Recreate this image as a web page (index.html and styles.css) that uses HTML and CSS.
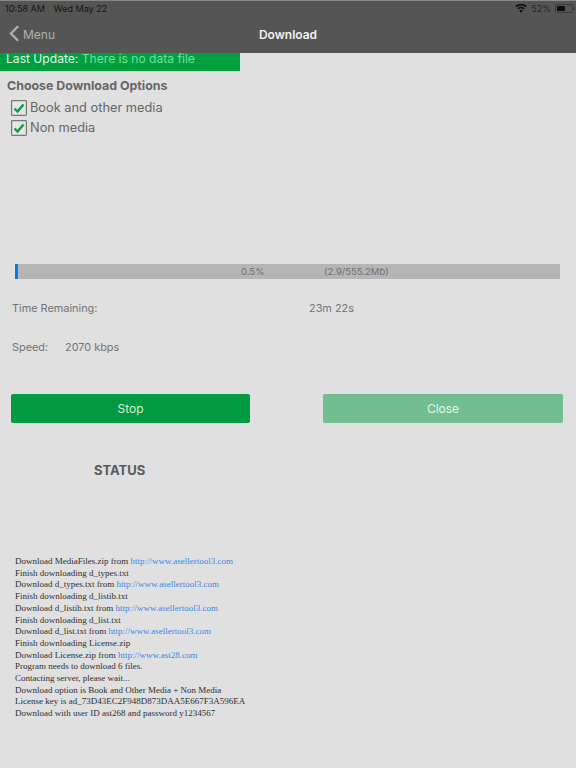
FILE: index.html
```html
<!DOCTYPE html>
<html lang="en">
<head>
<meta charset="utf-8">
<title>Download</title>
<link rel="stylesheet" href="styles.css">
</head>
<body>
<header class="header">
  <div class="status">
    <span class="clock">10:58 AM</span><span class="date">Wed May 22</span>
    <span class="status-right">
      <svg class="wifi" viewBox="0 0 16 12" width="12" height="9"><path d="M8 11.5 5.6 8.6a3.7 3.7 0 0 1 4.8 0zM4.4 7.2 3 5.6a7.7 7.7 0 0 1 10 0l-1.4 1.6a5.6 5.6 0 0 0-7.2 0zM1.8 4.2.3 2.6a11.6 11.6 0 0 1 15.4 0l-1.5 1.6a9.4 9.4 0 0 0-12.4 0z" fill="#111"/></svg>
      <span class="pct">52%</span>
      <svg class="battery" viewBox="0 0 20 9" width="20" height="9"><rect x=".5" y=".5" width="17" height="8" rx="2" fill="none" stroke="#3a3a3a"/><rect x="2" y="2" width="8" height="5" rx=".8" fill="#0c0c0c"/><path d="M18.6 3v3c.8-.2 1.2-.8 1.2-1.500s-.4-1.300-1.200-1.500z" fill="#3a3a3a"/></svg>
    </span>
  </div>
  <div class="nav">
    <span class="back">
      <svg viewBox="0 0 12 20" width="11" height="18"><path d="M10 1.500 2 9.500l8 8" fill="none" stroke="#b4b4b4" stroke-width="2.400"/></svg>
      Menu
    </span>
    <span class="title">Download</span>
  </div>
</header>
<div class="update"><span class="update-label">Last Update:</span> <span class="update-value">There is no data file</span></div>
<h2 class="options-title">Choose Download Options</h2>
<div class="option">
  <svg class="check" viewBox="0 0 16 16" width="16" height="16"><rect x=".6" y=".6" width="14.800" height="14.800" rx=".8" fill="#e6e6e6" stroke="#777" stroke-width="1.200"/><path d="M3.500 8.500 6.500 11.500 12.500 4.500" fill="none" stroke="#00a040" stroke-width="2.400"/></svg>
  Book and other media
</div>
<div class="option">
  <svg class="check" viewBox="0 0 16 16" width="16" height="16"><rect x=".6" y=".6" width="14.800" height="14.800" rx=".8" fill="#e6e6e6" stroke="#777" stroke-width="1.200"/><path d="M3.500 8.500 6.500 11.500 12.500 4.500" fill="none" stroke="#00a040" stroke-width="2.400"/></svg>
  Non media
</div>
<div class="progress">
  <div class="progress-fill"></div>
  <span class="progress-pct">0.5%</span>
  <span class="progress-size">(2.9/555.2Mb)</span>
</div>
<div class="time-row"><span class="time-label">Time Remaining:</span><span>23m 22s</span></div>
<div class="speed-row"><span class="speed-label">Speed:</span><span>2070 kbps</span></div>
<div class="buttons">
  <div class="btn btn-stop">Stop</div>
  <div class="btn btn-close">Close</div>
</div>
<h2 class="status-title">STATUS</h2>
<div class="log">
  <div>Download MediaFiles.zip from <a>http://www.asellertool3.com</a></div>
  <div>Finish downloading d_types.txt</div>
  <div>Download d_types.txt from <a>http://www.asellertool3.com</a></div>
  <div>Finish downloading d_listib.txt</div>
  <div>Download d_listib.txt from <a>http://www.asellertool3.com</a></div>
  <div>Finish downloading d_list.txt</div>
  <div>Download d_list.txt from <a>http://www.asellertool3.com</a></div>
  <div>Finish downloading License.zip</div>
  <div>Download License.zip from <a>http://www.ast28.com</a></div>
  <div>Program needs to download 6 files.</div>
  <div>Contacting server, please wait...</div>
  <div>Download option is Book and Other Media + Non Media</div>
  <div>License key is ad_73D43EC2F948D873DAA5E667F3A596EA</div>
  <div>Download with user ID ast268 and password y1234567</div>
</div>
</body>
</html>
```
FILE: styles.css
```css
* { box-sizing: border-box; }
html, body { margin: 0; padding: 0; }
body {
  width: 576px;
  height: 768px;
  overflow: hidden;
  background: #e0e0e0;
  color: #6b6b6b;
  font-family: Inter, "Liberation Sans", sans-serif;
}
.header {
  height: 53px;
  background: #555555;
  border-top: 1px solid #8a8a8a;
}
.status {
  display: flex;
  align-items: center;
  height: 15px;
  padding: 0 1px 0 5px;
  font-size: 9px;
  color: #161616;
}
.date { margin-left: 9px; }
.status-right {
  margin-left: auto;
  display: flex;
  align-items: center;
  gap: 4px;
  color: #262626;
  font-size: 9px;
}
.wifi, .battery { display: block; }
.nav {
  position: relative;
  height: 36px;
  display: flex;
  align-items: center;
  justify-content: center;
}
.back {
  position: absolute;
  left: 9px;
  top: 9px;
  display: flex;
  align-items: center;
  gap: 3px;
  font-size: 12px;
  color: #b0b0b0;
}
.title {
  font-size: 12px;
  font-weight: 600;
  color: #f2f2f2;
}
.update {
  width: 240px;
  height: 18px;
  background: #00a040;
  padding-left: 6px;
  font-size: 12.100px;
  line-height: 12px;
  white-space: nowrap;
}
.update-label { color: #e4f0e6; }
.update-value { color: #6fe09c; }
.options-title {
  margin: 7px 0 0 7px;
  font-size: 12.400px;
  line-height: 16px;
  font-weight: 700;
  color: #666;
}
.option {
  display: flex;
  align-items: center;
  gap: 3px;
  height: 20px;
  margin: 3px 0 0 11px;
  font-size: 12.800px;
  color: #666;
}
.option + .option { margin-top: 0; }
.check { display: block; margin-top: 1px; }
.progress {
  position: relative;
  display: block;
  width: 545px;
  height: 15px;
  margin: 127px 0 0 15px;
  background: #b5b5b5;
  font-size: 9.500px;
  line-height: 15px;
  color: #6f6f6f;
}
.progress-fill {
  position: absolute;
  left: 0;
  top: 0;
  width: 3px;
  height: 15px;
  background: #1273e6;
}
.progress-pct { position: absolute; left: 226px; }
.progress-size { position: absolute; left: 309px; }
.time-row, .speed-row {
  display: flex;
  font-size: 10.900px;
  line-height: 16px;
  color: #737373;
}
.time-row { margin: 21px 0 0 12px; }
.time-label { width: 297px; }
.speed-row { margin: 23px 0 0 12px; }
.speed-label { width: 53px; }
.buttons {
  display: flex;
  margin: 39px 0 0 11px;
  gap: 73px;
}
.btn {
  width: 239px;
  height: 29px;
  border-radius: 2px;
  text-align: center;
  line-height: 29px;
  font-size: 12px;
}
.btn-stop { background: #009a40; color: #d8f0df; }
.btn-close { width: 240px; background: #72be90; color: #e6f3ea; }
.status-title {
  margin: 39px 0 0 94px;
  font-size: 13px;
  line-height: 16px;
  font-weight: 700;
  color: #5a5a5a;
}
.log {
  margin: 78px 0 0 15px;
  font-family: "Liberation Serif", serif;
  font-size: 9px;
  line-height: 11.700px;
  color: #2f2f2f;
  white-space: nowrap;
}
.log a { color: #3c86e8; }
```
